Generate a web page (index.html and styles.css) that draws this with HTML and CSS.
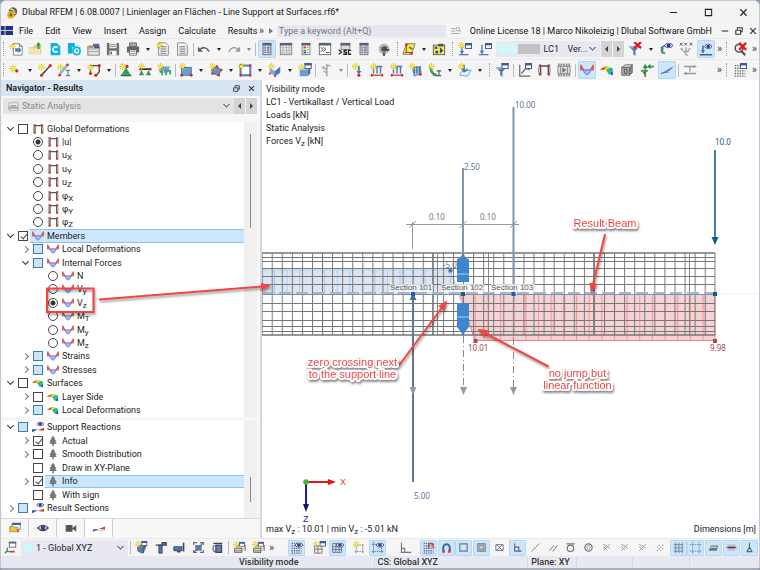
FILE: index.html
```html
<!DOCTYPE html>
<html lang="en">
<head>
<meta charset="utf-8">
<title>Dlubal RFEM</title>
<link rel="stylesheet" href="styles.css">
</head>
<body>
<svg class="sprite" aria-hidden="true">
  <defs>
    <symbol id="star" viewBox="0 0 8 8"><path d="M4 0V8M0 4H8M1.2 1.2 6.8 6.8M6.8 1.2 1.2 6.8" stroke="#d8c400" stroke-width="1"/><circle cx="4" cy="4" r="1.8" fill="#f7ea3a"/></symbol>
    <symbol id="win" viewBox="0 0 7 6"><rect x=".5" y=".5" width="6" height="5" fill="#fff" stroke="#4a5875"/><rect width="7" height="2.4" fill="#3f5ba0"/></symbol>
    <symbol id="eye" viewBox="0 0 10 6"><path d="M0 3Q5-3 10 3Q5 9 0 3Z" fill="#dfe3f5" stroke="#343a72" stroke-width="1"/><circle cx="5" cy="3" r="2.2" fill="#30378c"/></symbol>
    <symbol id="new" viewBox="0 0 16 16"><path d="M5 2h7l3 3v10H5z" fill="#fff" stroke="#777"/><path d="M12 2v3h3" fill="none" stroke="#777"/><path d="M7 7h4V5l3 4-3 4v-2H7z" fill="#4e7fb5"/><use href="#star" x="0" y="1" width="8" height="8"/></symbol>
    <symbol id="open" viewBox="0 0 16 16"><path d="M1 6h5l1-2h8v10H1z" fill="#d9c989"/><path d="M1 7h13v7H1z" fill="#f0e5b4"/><path d="M12 0l3 4h-2v4h-2V4H9z" fill="#1ba23c"/></symbol>
    <symbol id="cdoc" viewBox="0 0 16 16"><path d="M3 1h7l4 4v10H3z" fill="#08b4e4"/><path d="M11 6.500A3 3 0 1 0 11 10.500" fill="none" stroke="#fff" stroke-width="2"/></symbol>
    <symbol id="cgear" viewBox="0 0 16 16"><path d="M1 1h8v5H1zM1 4h5v9H1z" fill="#08b4e4"/><circle cx="11" cy="10" r="4" fill="#fff" stroke="#08b4e4" stroke-width="2"/><circle cx="11" cy="10" r="5.500" fill="none" stroke="#08b4e4" stroke-dasharray="2 1.500"/><circle cx="11" cy="10" r="1.500" fill="#08b4e4"/></symbol>
    <symbol id="blocks" viewBox="0 0 16 16"><rect x="1" y="5" width="13" height="10" fill="#e8e8e8" stroke="#777"/><path d="M1 8h13M1 11h13" stroke="#999"/><rect x="2" y="4" width="5" height="3" fill="#c08b60"/><path d="M7 2h7v3H7z" fill="#4c6fae"/><path d="M8 6h6" stroke="#555" stroke-width="2"/></symbol>
    <symbol id="save" viewBox="0 0 16 16"><path d="M1 1h13l1 1v13H1z" fill="#707070"/><path d="M4 1h8v6H4z" fill="#eee"/><path d="M4 10h8v5H4z" fill="#fff"/><path d="M5 3h6M5 5h6" stroke="#888"/><path d="M6 11v3" stroke="#555" stroke-width="2"/></symbol>
    <symbol id="print" viewBox="0 0 16 16"><path d="M4 1h8v4H4z" fill="#aaa" stroke="#666"/><path d="M1 5h14v7H1z" fill="#666"/><path d="M4 9h8v6H4z" fill="#fff" stroke="#666"/><path d="M5 11h6M5 13h6" stroke="#888"/></symbol>
    <symbol id="doc" viewBox="0 0 16 16"><path d="M3 1h8l3 3v11H3z" fill="#fff" stroke="#777"/><path d="M5 5h7M5 7h7M5 9h7M5 11h7M5 13h7" stroke="#777"/></symbol>
    <symbol id="listnew" viewBox="0 0 16 16"><use href="#doc" width="16" height="16"/><use href="#star" x="0" y="0" width="8" height="8"/></symbol>
    <symbol id="undo" viewBox="0 0 16 16"><path d="M3 9Q9 3 14 11" fill="none" stroke="#666" stroke-width="1.800"/><path d="M1 5v6h6z" fill="#666"/></symbol>
    <symbol id="redo" viewBox="0 0 16 16"><path d="M13 9Q7 3 2 11" fill="none" stroke="#999" stroke-width="1.500"/><path d="M15 5v6H9z" fill="#999"/></symbol>
    <symbol id="panel" viewBox="0 0 16 16"><rect x="3.500" y="1.500" width="9" height="13" fill="#d6dbe0" stroke="#666"/><path d="M3 1h10v3H3z" fill="#56627c"/><path d="M5 6h2M5 8h2M5 10h2M5 12h2M8 6h3M8 8h3M8 10h3M8 12h3" stroke="#557"/></symbol>
    <symbol id="table" viewBox="0 0 16 16"><rect x="1.500" y="1.500" width="13" height="13" fill="#f4f4f4" stroke="#777"/><path d="M1 1h14v3H1z" fill="#56627c"/><path d="M1 6.500h14M1 9.500h14M1 12.500h14M4.500 4v11M8.500 4v11M11.500 4v11" stroke="#aaa"/></symbol>
    <symbol id="colors" viewBox="0 0 16 16"><rect x="3.500" y="1.500" width="9" height="13" fill="#fff" stroke="#777"/><path d="M3 1h10v3H3z" fill="#56627c"/><path d="M5 5h3v2H5z" fill="#e33"/><path d="M5 7h3v2H5z" fill="#ec3"/><path d="M5 9h3v2H5z" fill="#3b4"/><path d="M5 11h3v2H5z" fill="#35d"/><path d="M9 6h2M9 9h2M9 12h2" stroke="#666"/></symbol>
    <symbol id="console" viewBox="0 0 16 16"><rect x="1.500" y="1.500" width="13" height="13" fill="#fff" stroke="#666"/><path d="M1 1h14v3H1z" fill="#56627c"/><path d="M3 6l3 2.500L3 11M6 6l3 2.500L6 11M9 12h4" fill="none" stroke="#333"/></symbol>
    <symbol id="sc" viewBox="0 0 16 16"><rect x="3.500" y="1.500" width="10" height="7" fill="#ddd" stroke="#777"/><path d="M3 1h11v3H3z" fill="#56627c"/><path d="M1 9l3 2.500L1 14M10 9.500H7v2h2.500v2.500H6M15 9.500h-3v4.500h3" fill="none" stroke="#222" stroke-width="1.500"/></symbol>
    <symbol id="wheel" viewBox="0 0 16 16"><circle cx="8" cy="8" r="5.500" fill="#bbb" stroke="#888" stroke-dasharray="2 1"/><circle cx="8" cy="8" r="3.200" fill="#555"/><path d="M10 5v4h4M8 12v4" stroke="#444" fill="none" stroke-width="2"/></symbol>
    <symbol id="plane" viewBox="0 0 16 16"><path d="M5 2h10l-4 12H1z" fill="#f3e94a" stroke="#777"/><path d="M5 3v9M3 12h8" stroke="#a33"/><circle cx="5" cy="3" r="1.500" fill="#d22"/><circle cx="11" cy="13" r="1.500" fill="#d22"/><path d="M8 6l4 2" stroke="#393" stroke-width="2"/></symbol>
    <symbol id="ybox" viewBox="0 0 16 16"><rect x="1.500" y="3.500" width="13" height="11" fill="#f3ea62" stroke="#555"/><path d="M3 5h3v3H3zM7 2h6v3H7z" fill="#555"/><path d="M4 10h3v3H4zM9 6v7l4-3z" fill="#3b4668"/></symbol>
    <symbol id="load" viewBox="0 0 16 16"><path d="M4.500 3v10M1 14.500h11" stroke="#4a78b8" stroke-width="1.500"/><path d="M2 10h5l-2.500 4z" fill="#4a78b8"/><use href="#win" x="8" y="1" width="8" height="7"/></symbol>
    <symbol id="loadnew" viewBox="0 0 16 16"><use href="#load" width="16" height="16"/><use href="#star" width="8" height="8"/></symbol>
    <symbol id="filter" viewBox="0 0 16 16"><path d="M1 5h12L8.500 10v6L6 14v-4z" fill="#4f77b0"/><path d="M1 5h12l-2 2H3z" fill="#8db2dc"/></symbol>
    <symbol id="filterx" viewBox="0 0 16 16"><use href="#filter" width="16" height="16"/><path d="M7 0l8 7M15 0L7 7" stroke="#e5141c" stroke-width="2.500"/></symbol>
    <symbol id="filterwin" viewBox="0 0 16 16"><use href="#filter" width="16" height="16"/><use href="#win" x="7" y="0" width="9" height="7"/></symbol>
    <symbol id="speye" viewBox="0 0 16 16"><path d="M7 4Q1 6 4 13M2 6l3 2M2 9l3 1M3 12l4 1" fill="none" stroke="#3f8b66" stroke-width="2"/><use href="#eye" x="6" y="1" width="10" height="6"/></symbol>
    <symbol id="xxx" viewBox="0 0 16 16"><path d="M1 1l3 3M4 1L1 4M6 1l3 3M9 1L6 4M12 1l3 3M15 1l-3 3" stroke="#444"/><path d="M2 7l3 3M13 7l-3 3M8 6v4M5 11h6M7 11q0 4 3 4" fill="none" stroke="#999" stroke-width="1.500"/></symbol>
    <symbol id="arroweye" viewBox="0 0 16 16"><path d="M4.500 4v8M1 14.500h14" stroke="#44628c" stroke-width="1.600"/><path d="M2 9h5l-2.500 4z" fill="#4a78b8"/><use href="#eye" x="6" y="2" width="9" height="6"/></symbol>
    <symbol id="zoomx" viewBox="0 0 16 16"><circle cx="7" cy="7" r="4.500" fill="none" stroke="#555" stroke-width="1.800"/><path d="M9 10l5 5" stroke="#555" stroke-width="2.500"/><path d="M7 1l8 8M15 1L7 9" stroke="#e5141c" stroke-width="2.500"/></symbol>
    <symbol id="node" viewBox="0 0 16 16"><use href="#star" x="1" y="2" width="9" height="9"/><circle cx="10" cy="9" r="1.800" fill="#c22"/></symbol>
    <symbol id="line" viewBox="0 0 16 16"><path d="M4 14L14 3" stroke="#333" stroke-width="1.600"/><circle cx="4" cy="14" r="1.800" fill="#d22"/><circle cx="14" cy="3" r="1.800" fill="#d22"/><use href="#star" y="1" width="8" height="8"/></symbol>
    <symbol id="member" viewBox="0 0 16 16"><path d="M3 13L12 2" stroke="#8fb4e0" stroke-width="3"/><use href="#star" y="1" width="8" height="8"/><circle cx="12" cy="2" r="1.500" fill="#d22"/><circle cx="3" cy="14" r="1.500" fill="#d22"/><path d="M10 8.500h5M12.500 8.500v6M10 14.500h5" stroke="#688" stroke-width="1.300"/></symbol>
    <symbol id="poly" viewBox="0 0 16 16"><path d="M4 12V3h10v7l-4 5" fill="none" stroke="#444" stroke-width="1.500"/><circle cx="4" cy="12" r="1.800" fill="#d22"/><circle cx="14" cy="3" r="1.800" fill="#d22"/><circle cx="10" cy="14" r="1.800" fill="#d22"/><use href="#star" y="1" width="8" height="8"/></symbol>
    <symbol id="nsup" viewBox="0 0 16 16"><path d="M8 5l5 8H3z" fill="#2c9a58"/><path d="M2 14h12" stroke="#23713f" stroke-width="2"/><circle cx="9" cy="4" r="2" fill="#d22"/><use href="#star" y="0" width="8" height="8"/></symbol>
    <symbol id="lsup" viewBox="0 0 16 16"><path d="M2 7h12" stroke="#333" stroke-width="2"/><path d="M4 8l3 6H1zM12 8l3 6H9z" fill="#2c9a58"/><circle cx="3" cy="7" r="1.600" fill="#d22"/><circle cx="14" cy="7" r="1.600" fill="#d22"/><use href="#star" y="0" width="8" height="8"/></symbol>
    <symbol id="ssup" viewBox="0 0 16 16"><path d="M4 4h11l-2 5H2z" fill="#6f9fcb"/><path d="M3 10h3v4M8 10h3l-1 4M12 9h3v4" fill="none" stroke="#37a064" stroke-width="2"/><use href="#star" y="0" width="8" height="8"/></symbol>
    <symbol id="surf" viewBox="0 0 16 16"><rect x="3" y="5" width="11" height="9" fill="#6d9ed2" stroke="#476b93"/><circle cx="14" cy="14" r="1.600" fill="#d22"/><circle cx="3" cy="14" r="1.600" fill="#d22"/><use href="#star" y="0" width="8" height="8"/></symbol>
    <symbol id="shell" viewBox="0 0 16 16"><path d="M3 7l6-3 5 4-3 6-7-2z" fill="#6d8fc0" stroke="#476b93"/><circle cx="9" cy="4" r="1.500" fill="#d22"/><circle cx="14" cy="8" r="1.500" fill="#d22"/><circle cx="11" cy="14" r="1.500" fill="#d22"/><circle cx="4" cy="12" r="1.500" fill="#d22"/><use href="#star" y="0" width="8" height="8"/></symbol>
    <symbol id="opening" viewBox="0 0 16 16"><rect x="3" y="3" width="11" height="11" fill="#fff" stroke="#5f86b4" stroke-width="2.500"/><path d="M2 3h2M13 3h2M2 14h2M13 14h2" stroke="#d22" stroke-width="3"/><use href="#star" y="0" width="8" height="8"/></symbol>
    <symbol id="fold" viewBox="0 0 16 16"><path d="M2 6l6 3v6l-6-4z" fill="#79aadd"/><path d="M8 9l6-5v7l-6 4z" fill="#4b7bb4"/><path d="M1 12h2M7 15h2" stroke="#d22" stroke-width="2"/><use href="#star" y="0" width="8" height="8"/></symbol>
    <symbol id="boxwin" viewBox="0 0 16 16"><path d="M2 8l3-3h9l-3 3z" fill="#a4c7ea"/><path d="M2 8h9v7H2z" fill="#6d9ed2"/><path d="M11 8l3-3v7l-3 3z" fill="#466f9e"/><use href="#win" x="7" y="0" width="9" height="7"/><use href="#star" y="1" width="8" height="8"/></symbol>
    <symbol id="dim" viewBox="0 0 16 16"><path d="M9 1v14M9 3h4M5 5l4 3M5 9l3 2" stroke="#aaa" stroke-width="1.800"/><circle cx="5" cy="5" r="2" fill="#bbb"/></symbol>
    <symbol id="nload" viewBox="0 0 16 16"><path d="M9 3v8" stroke="#4a78b8" stroke-width="2"/><path d="M6 9h6l-3 4z" fill="#4a78b8"/><circle cx="9" cy="14" r="1.800" fill="#d22"/><use href="#star" x="1" y="0" width="8" height="8"/></symbol>
    <symbol id="mload" viewBox="0 0 16 16"><path d="M2 4h12M4 4v8M8 4v8M12 4v8" stroke="#4a78b8" stroke-width="1.600"/><path d="M2 14h12" stroke="#d55" stroke-width="1.500"/><path d="M1 14h2M13 14h2" stroke="#c22" stroke-width="3"/><use href="#star" y="0" width="8" height="8"/></symbol>
    <symbol id="sload" viewBox="0 0 16 16"><path d="M4 5l9-1 1 8-8 3z" fill="#a9c5e4" stroke="#5878a8"/><path d="M6 4v8M9 4v8M12 4v8" stroke="#4a68a8" stroke-width="1.500"/><circle cx="13" cy="13" r="1.500" fill="#d22"/><use href="#star" y="0" width="8" height="8"/></symbol>
    <symbol id="imp" viewBox="0 0 16 16"><path d="M3 3q0 10 7 11" fill="none" stroke="#38955a" stroke-width="3"/><path d="M10 9h5M12.500 9v5M10 14.500h5" stroke="#555" stroke-width="1.300"/><use href="#star" y="0" width="8" height="8"/></symbol>
    <symbol id="free" viewBox="0 0 16 16"><path d="M4 10l11-2-4 7-9-1z" fill="#e6f3fb" stroke="#57a6cf"/><path d="M7 2v7M4 6l3 4 4-3" fill="none" stroke="#4a78b8" stroke-width="1.800"/><use href="#star" y="0" width="8" height="8"/></symbol>
    <symbol id="axis" viewBox="0 0 16 16"><path d="M2 2v13h12M4 12l5-6 4 2" fill="none" stroke="#667" stroke-width="1.400"/><use href="#win" x="8" y="0" width="8" height="7"/></symbol>
    <symbol id="defo" viewBox="0 0 16 16"><path d="M4 13V3.500h9V13" fill="none" stroke="#555" stroke-width="1.800"/><path d="M3 4Q0 8 3 13M14 4q2 4 0 9" fill="none" stroke="#999" stroke-width="1.300"/><path d="M2 13h3M12 13h3M2 3h3M12 3h3" stroke="#c83a3a" stroke-width="2.500"/></symbol>
    <symbol id="film" viewBox="0 0 16 16"><path d="M1 2h14M1 14h14" stroke="#888" stroke-width="3" stroke-dasharray="2 1"/><path d="M1 4v8h14V4z" fill="#ddd" stroke="#888"/><path d="M4 4v8M12 4v8" stroke="#888"/><path d="M6 5l5 3-5 3z" fill="#777"/></symbol>
    <symbol id="mem" viewBox="0 0 16 16"><path d="M0 8H16" stroke="#778"/><path d="M3.500 8Q8 19 12.500 8Z" fill="#aab6f2" stroke="#6478e8"/><path d="M1 2v6M1 3l3 5M15 2v6M15 3l-3 5" fill="none" stroke="#e85050" stroke-width="1.800"/></symbol>
    <symbol id="rain" viewBox="0 0 16 16"><path d="M0 8Q5 3 9 4L7 8Z" fill="#e9a02a"/><path d="M0 8Q3 5 6 4.500L5 7Z" fill="#e33b25"/><path d="M5 7l4-3 3 1-3 5z" fill="#dde22c"/><path d="M7 8l5-3 2 1-1 6-3 1z" fill="#35c24b"/><path d="M9 9l6-3-1 6-3 1z" fill="#1fb7d8"/><path d="M12 12l2-3 1 4-2 1z" fill="#3147d6"/></symbol>
    <symbol id="cube" viewBox="0 0 16 16"><path d="M2 5l4-3h8l-3 3z" fill="#ddd" stroke="#666"/><path d="M2 5h9v9H2z" fill="#aaa" stroke="#666"/><path d="M11 5l3-3v9l-3 3z" fill="#888" stroke="#666"/><path d="M5 7v5h3V7z" fill="none" stroke="#555"/></symbol>
    <symbol id="greens" viewBox="0 0 16 16"><path d="M6 16V6M1 9h8M16 4H10" stroke="#33a04e" stroke-width="2"/><path d="M3 6h6L6 1zM12 1v6L8 4z" fill="#258c40"/><path d="M3 11l3-2v5z" fill="#b33"/></symbol>
    <symbol id="wedge" viewBox="0 0 16 16"><path d="M1 12L15 4Q13 9 7 10z" fill="#5b76d8"/><path d="M1 12l9-2" stroke="#4157a8"/></symbol>
    <symbol id="arrows" viewBox="0 0 16 16"><path d="M1 4h12M3 12h12M8 4q0 8 0 4" fill="none" stroke="#999" stroke-width="1.500"/><path d="M12 2l4 2-4 2zM4 10l-4 2 4 2z" fill="#999"/></symbol>
    <symbol id="grid" viewBox="0 0 16 16"><path d="M2 3h12M2 6h12M2 9h12M2 12h12M2 15h12" stroke="#667" stroke-width="1.600" stroke-dasharray="1.600 1.200"/></symbol>
    <symbol id="gridwin" viewBox="0 0 16 16"><use href="#grid" width="16" height="16"/><use href="#win" x="8" y="0" width="8" height="7"/></symbol>
    <symbol id="grideye" viewBox="0 0 16 16"><use href="#grid" width="16" height="16"/><use href="#eye" x="6" y="2" width="10" height="6"/></symbol>
    <symbol id="treeic" viewBox="0 0 16 16"><path d="M8 1l3 4-1 0 3 4-2 0 2 3H3l2-3H3l3-4H5z" fill="#777"/><path d="M8 11v4" stroke="#666" stroke-width="1.800"/></symbol>
    <symbol id="redblue" viewBox="0 0 16 16"><path d="M0 13v-3l8-1z" fill="#2f56b4"/><path d="M8 9l8-3v4z" fill="#d33b2b"/><path d="M0 11h16" stroke="#555" stroke-width=".5"/></symbol>
    <symbol id="rbeye" viewBox="0 0 16 16"><path d="M0 15v-4l8 0z" fill="#2f56b4"/><path d="M8 12l8-3v4z" fill="#d33b2b"/><use href="#eye" x="6" y="1" width="10" height="6"/></symbol>
    <symbol id="folder" viewBox="0 0 16 16"><path d="M4 2h11v8H4z" fill="#fff" stroke="#4a69ad"/><path d="M4 1h12v3H4z" fill="#3f62b5"/><path d="M1 6h5l1 1h5v6H1z" fill="#edc34b" stroke="#a98222"/><path d="M10 9l5 4h-3v2z" fill="#d44"/></symbol>
    <symbol id="bigeye" viewBox="0 0 16 16"><path d="M1 8Q8 1 15 8Q8 15 1 8Z" fill="#fff" stroke="#445" stroke-width="1.500"/><circle cx="8" cy="8" r="3.200" fill="#38449c"/></symbol>
    <symbol id="cam" viewBox="0 0 16 16"><path d="M1 4h9v9H1zM10 8l5-4v9l-5-4z" fill="#555"/></symbol>
    <symbol id="cs" viewBox="0 0 16 16"><path d="M4 8v5h5M4 12l-3 3" fill="none" stroke="#2a9a4a" stroke-width="1.600"/><path d="M8 13h5" stroke="#d33" stroke-width="2"/><rect x="6.500" y="1.500" width="8" height="6" fill="#fff" stroke="#557"/><path d="M6 1h9v2H6z" fill="#56627c"/></symbol>
    <symbol id="vcube" viewBox="0 0 16 16"><path d="M3 8l4-3h7l-4 10-6-2z" fill="#5d83b4" stroke="#456"/><path d="M10 8v6M10 8l4-3" stroke="#345"/><use href="#win" x="7" y="0" width="9" height="6"/><use href="#star" y="0" width="8" height="8"/></symbol>
    <symbol id="vx" viewBox="0 0 16 16"><path d="M6 5h4v10H6z" fill="#4f78b0" stroke="#345"/><path d="M2 5h10M10 2h5v3h-5z" fill="#5d83b4" stroke="#445" stroke-width="1.600"/></symbol>
    <symbol id="vy" viewBox="0 0 16 16"><path d="M1 7h10v5H1z" fill="#4f78b0" stroke="#345"/><path d="M13 2v11M5 13h4" stroke="#445" stroke-width="2"/></symbol>
    <symbol id="vz" viewBox="0 0 16 16"><path d="M4 5h8v7H4z" fill="#5d83b4"/><path d="M2 5V2h4M10 2h4v3M14 11v3h-4M6 14H2v-3M3 13L13 3" fill="none" stroke="#667" stroke-width="1.300"/></symbol>
    <symbol id="vr" viewBox="0 0 16 16"><path d="M6 5h7v9H6zM3 3h11" fill="#5d83b4" stroke="#445" stroke-width="1.600"/><path d="M4 5Q0 11 6 14" fill="none" stroke="#667" stroke-width="1.600"/></symbol>
    <symbol id="vbuild" viewBox="0 0 16 16"><path d="M2 14V9h9v5zM4 8l2-3h9v7" fill="#ded8ce" stroke="#555"/><path d="M2 12h9" stroke="#965"/><use href="#win" x="7" y="1" width="8" height="6"/><use href="#star" y="0" width="8" height="8"/></symbol>
    <symbol id="tilenew" viewBox="0 0 16 16"><path d="M2 6h9v9H2zM2 10h9M6 6v9" fill="#eee" stroke="#666"/><use href="#win" x="8" y="0" width="8" height="7"/><use href="#star" y="0" width="7" height="7"/></symbol>
    <symbol id="tileeye" viewBox="0 0 16 16"><path d="M2 3h11v11H2zM2 7h11M2 10.500h11M6 3v11M10 3v11" fill="none" stroke="#667"/><use href="#eye" x="6" y="2" width="10" height="6"/></symbol>
    <symbol id="marknew" viewBox="0 0 16 16"><path d="M4 4v11M12 4v11M2 5h12M2 13h12" fill="none" stroke="#777" stroke-dasharray="2 1"/><use href="#star" width="8" height="8"/></symbol>
    <symbol id="markeye" viewBox="0 0 16 16"><path d="M3 1v14M13 8v7M1 4h6M1 13h14" fill="none" stroke="#567" stroke-dasharray="2 1"/><use href="#eye" x="6" y="2" width="10" height="6"/></symbol>
    <symbol id="ell" viewBox="0 0 16 16"><path d="M3 2v12h12M3 9h4v5" fill="none" stroke="#777" stroke-width="1.400"/></symbol>
    <symbol id="gmag" viewBox="0 0 16 16"><use href="#grid" width="16" height="16"/><path d="M8 9V6a3 3 0 0 1 6 0v3" fill="none" stroke="#c44a4a" stroke-width="2"/></symbol>
    <symbol id="mag" viewBox="0 0 16 16"><path d="M4 13V8a4 4 0 0 1 8 0v5" fill="none" stroke="#4668a5" stroke-width="2.500"/><path d="M3 13h3M10 13h3" stroke="#d33" stroke-width="3"/></symbol>
    <symbol id="sq" viewBox="0 0 16 16"><path d="M3.500 3.500h9v9h-9z" fill="none" stroke="#777" stroke-width="1.400"/></symbol>
    <symbol id="sqo" viewBox="0 0 16 16"><use href="#sq" width="16" height="16"/><circle cx="8" cy="8" r="3" fill="none" stroke="#777"/><path d="M4 4l8 8M12 4l-8 8" stroke="#999"/></symbol>
    <symbol id="sqx" viewBox="0 0 16 16"><path d="M3.500 4.500h9v7h-9zM4 4l8 8M12 4l-8 8" fill="none" stroke="#777" stroke-width="1.200"/></symbol>
    <symbol id="perp" viewBox="0 0 16 16"><path d="M4.500 3v9.500H13M5 7.500h4.500v5" fill="none" stroke="#667" stroke-width="1.400"/></symbol>
    <symbol id="sl" viewBox="0 0 16 16"><path d="M3 13l4-4M8 8l5-5M6 8l2 2" stroke="#888" stroke-width="1.200"/></symbol>
    <symbol id="par" viewBox="0 0 16 16"><path d="M3 12l6-7M7 13l6-8" stroke="#777" stroke-width="1.200"/></symbol>
    <symbol id="tan" viewBox="0 0 16 16"><path d="M3 3.500h10" stroke="#777" stroke-width="1.500"/><circle cx="8" cy="9" r="4" fill="none" stroke="#777" stroke-width="1.500"/></symbol>
    <symbol id="circ" viewBox="0 0 16 16"><circle cx="8" cy="8" r="4.500" fill="none" stroke="#777" stroke-width="1.500"/><circle cx="8" cy="8" r="2.200" fill="none" stroke="#999"/></symbol>
    <symbol id="cr" viewBox="0 0 16 16"><path d="M4 12l8-8M4 7l5 4M7 5l5 4M4 4l3 2" stroke="#999" stroke-width="1.200"/></symbol>
    <symbol id="dots" viewBox="0 0 16 16"><path d="M4 12l8-8M8 12l4-4M4 8l3-4" stroke="#999" stroke-width="1.400" stroke-dasharray="1.500 1.500"/></symbol>
    <symbol id="gridl" viewBox="0 0 16 16"><path d="M2 4.500h12M2 8.500h12M2 12.500h12M4.500 2v13M8.500 2v13M12.500 2v13" stroke="#68798c"/></symbol>
    <symbol id="mark" viewBox="0 0 16 16"><path d="M4.500 1v14M12.500 1v14M1 4.500h14M1 12.500h14" stroke="#68798c" stroke-dasharray="2 1"/></symbol>
    <symbol id="layers" viewBox="0 0 16 16"><path d="M2 12l3-7h9l-2 7z" fill="#777"/><path d="M4 8h8M5 6h8" stroke="#fff" stroke-width=".8"/></symbol>
    <symbol id="clip" viewBox="0 0 16 16"><path d="M3 5h10M3 11h10" stroke="#9ab"/><path d="M2 8h12" stroke="#e33" stroke-width="2"/><path d="M4 8h8" stroke="#534" stroke-width="2"/></symbol>
    <symbol id="pin" viewBox="0 0 16 16"><path d="M8 2v8M5 13l3-6 3 6z" fill="none" stroke="#567" stroke-width="1.400"/></symbol>
    <symbol id="load3" viewBox="0 0 16 16"><path d="M1.500 2.500h13v11h-13z" fill="#eee" stroke="#999"/><path d="M1 10h14M4 7h8" stroke="#888" stroke-width="2"/></symbol>
    <symbol id="find" viewBox="0 0 16 16"><path d="M0 4h7M0 8h7M0 12h14" stroke="#999" stroke-width="1.300"/><circle cx="11" cy="5" r="3" fill="none" stroke="#999" stroke-width="1.300"/><path d="M13 7l3 3" stroke="#999" stroke-width="1.300"/></symbol>
    <symbol id="restore" viewBox="0 0 10 10"><path d="M3 3V1h6v5H7M1 4h6v5H1z" fill="none" stroke="#333" stroke-width="1.300"/></symbol>
    <symbol id="close" viewBox="0 0 10 10"><path d="M1.500 1.500l7 7M8.500 1.500l-7 7" stroke="#333" stroke-width="1.500"/></symbol>
    <symbol id="max" viewBox="0 0 10 10"><path d="M1.500 1.500h7v7h-7z" fill="none" stroke="#222" stroke-width="1.200"/></symbol>
    <symbol id="min" viewBox="0 0 10 10"><path d="M1 5h8" stroke="#222" stroke-width="1.300"/></symbol>
  </defs>
</svg>

<div class="app">
  <header class="titlebar">
    <svg class="logo" viewBox="0 0 16 16"><path d="M3 6Q6 0 11 2q4 2 2 8l-3 3-4-5z" fill="#4d6479"/><circle cx="6" cy="11" r="4.500" fill="#e3ae1d"/><path d="M5 4q5-1 6 6" fill="none" stroke="#e9c64d" stroke-width="2"/><circle cx="6" cy="11" r="1.800" fill="#7d5d1b"/></svg>
    <h1>Dlubal RFEM | 6.08.0007 | Linienlager an Flächen - Line Support at Surfaces.rf6*</h1>
    <div class="winbtns">
      <button aria-label="Minimize"><svg><use href="#min"/></svg></button>
      <button aria-label="Maximize"><svg><use href="#max"/></svg></button>
      <button aria-label="Close"><svg><use href="#close"/></svg></button>
    </div>
  </header>

  <div class="menubar">
    <svg class="flag" viewBox="0 0 12 9"><path d="M0 0h12v9H0z" fill="#26327c"/><path d="M0 4.500h12M4 0v9" stroke="#c5cbe8"/></svg>
    <nav><a href="#">File</a><a href="#">Edit</a><a href="#">View</a><a href="#">Insert</a><a href="#">Assign</a><a href="#">Calculate</a><a href="#">Results</a></nav>
    <span class="more">»</span><span class="play"></span>
    <input class="search" type="text" aria-label="Keyword search" placeholder="Type a keyword (Alt+Q)">
    <svg class="find"><use href="#find"/></svg>
    <span class="license">Online License 18 | Marco Nikoleizig | Dlubal Software GmbH</span>
    <div class="docbtns">
      <button aria-label="Minimize document"><svg><use href="#min"/></svg></button>
      <button aria-label="Restore document"><svg><use href="#restore"/></svg></button>
      <button aria-label="Close document"><svg><use href="#close"/></svg></button>
    </div>
  </div>

  <div class="toolbar main">
    <div class="group">
      <i class="grip"></i>
      <button class="tb" aria-label="New"><svg><use href="#new"/></svg></button>
      <button class="tb" aria-label="Open"><svg><use href="#open"/></svg></button>
      <button class="tb" aria-label="Block manager"><svg><use href="#cdoc"/></svg></button>
      <button class="tb" aria-label="Cloud settings"><svg><use href="#cgear"/></svg></button>
      <button class="tb" aria-label="Blocks"><svg><use href="#blocks"/></svg></button>
      <button class="tb" aria-label="Save"><svg><use href="#save"/></svg></button>
      <button class="tb" aria-label="Print"><svg><use href="#print"/></svg></button>
      <button class="caret" aria-label="Print options"></button>
      <button class="tb" aria-label="New report"><svg><use href="#listnew"/></svg></button>
      <button class="tb" aria-label="Report"><svg><use href="#doc"/></svg></button>
      <i class="sep"></i>
      <button class="tb" aria-label="Undo"><svg><use href="#undo"/></svg></button>
      <button class="caret" aria-label="Undo list"></button>
      <button class="tb" aria-label="Redo"><svg><use href="#redo"/></svg></button>
      <button class="caret dim" aria-label="Redo list"></button>
      <i class="sep"></i>
      <button class="tb on" aria-label="Navigator"><svg><use href="#panel"/></svg></button>
      <button class="tb" aria-label="Tables"><svg><use href="#table"/></svg></button>
      <button class="tb" aria-label="Control panel"><svg><use href="#colors"/></svg></button>
      <button class="tb" aria-label="Console"><svg><use href="#console"/></svg></button>
      <button class="tb" aria-label="Script manager"><svg><use href="#sc"/></svg></button>
      <button class="tb" aria-label="Panel"><svg><use href="#panel"/></svg></button>
      <button class="tb" aria-label="Navigation wheel"><svg><use href="#wheel"/></svg></button>
    </div>
    <div class="group">
      <i class="grip"></i>
      <button class="tb" aria-label="Work plane"><svg><use href="#plane"/></svg></button>
      <button class="caret" aria-label="Work plane list"></button>
      <button class="tb" aria-label="Selection"><svg><use href="#ybox"/></svg></button>
    </div>
    <div class="group">
      <i class="grip"></i>
      <button class="tb" aria-label="New load case"><svg><use href="#loadnew"/></svg></button>
      <button class="tb" aria-label="Load cases"><svg><use href="#load"/></svg></button>
      <div class="lc">
        <i class="sw c1"></i><i class="sw c2"></i><i class="sw c3"></i><span>LC1</span>
        <select aria-label="Load case"><option>Ver...</option></select>
      </div>
      <div class="pair"><button aria-label="Previous load case"><i class="tri l"></i></button><button aria-label="Next load case"><i class="tri"></i></button></div>
      <button class="tb" aria-label="Clear filter"><svg><use href="#filterx"/></svg></button>
      <button class="caret" aria-label="Filter list"></button>
      <button class="tb" aria-label="Show imperfections"><svg><use href="#speye"/></svg></button>
      <button class="tb" aria-label="Show values"><svg><use href="#xxx"/></svg></button>
      <button class="tb on" aria-label="Show loads"><svg><use href="#arroweye"/></svg></button>
      <span class="more">»</span>
    </div>
    <div class="group">
      <i class="grip"></i>
      <button class="tb" aria-label="Cancel zoom"><svg><use href="#zoomx"/></svg></button>
      <span class="more">»</span>
    </div>
  </div>

  <div class="toolbar edit">
    <div class="group">
      <i class="grip"></i>
      <button class="tb" aria-label="Node"><svg><use href="#node"/></svg></button>
      <button class="caret" aria-label="Node list"></button>
      <button class="tb" aria-label="Line"><svg><use href="#line"/></svg></button>
      <button class="tb" aria-label="Member"><svg><use href="#member"/></svg></button>
      <button class="caret" aria-label="Member list"></button>
      <button class="tb" aria-label="Polyline"><svg><use href="#poly"/></svg></button>
      <button class="caret" aria-label="Polyline list"></button>
      <i class="sep"></i>
      <button class="tb" aria-label="Nodal support"><svg><use href="#nsup"/></svg></button>
      <button class="tb" aria-label="Line support"><svg><use href="#lsup"/></svg></button>
      <button class="tb" aria-label="Surface support"><svg><use href="#ssup"/></svg></button>
      <i class="sep"></i>
      <button class="tb" aria-label="Surface"><svg><use href="#surf"/></svg></button>
      <button class="caret" aria-label="Surface list"></button>
      <button class="tb" aria-label="Shell"><svg><use href="#shell"/></svg></button>
      <button class="caret" aria-label="Shell list"></button>
      <button class="tb" aria-label="Opening"><svg><use href="#opening"/></svg></button>
      <button class="caret" aria-label="Opening list"></button>
      <button class="tb" aria-label="Solid"><svg><use href="#fold"/></svg></button>
      <button class="caret" aria-label="Solid list"></button>
      <button class="tb" aria-label="Block"><svg><use href="#boxwin"/></svg></button>
      <i class="sep"></i>
      <button class="tb" aria-label="Dimension"><svg><use href="#dim"/></svg></button>
      <button class="caret dim" aria-label="Dimension list"></button>
      <i class="sep"></i>
      <button class="tb" aria-label="Nodal load"><svg><use href="#nload"/></svg></button>
      <button class="tb" aria-label="Member load"><svg><use href="#mload"/></svg></button>
      <button class="tb" aria-label="Line load"><svg><use href="#mload"/></svg></button>
      <button class="tb" aria-label="Surface load"><svg><use href="#sload"/></svg></button>
      <button class="tb" aria-label="Imperfection"><svg><use href="#imp"/></svg></button>
      <button class="caret" aria-label="Imperfection list"></button>
      <button class="tb" aria-label="Free load"><svg><use href="#free"/></svg></button>
      <button class="caret" aria-label="Free load list"></button>
    </div>
    <div class="group">
      <i class="grip"></i>
      <button class="tb" aria-label="Result filter"><svg><use href="#filterwin"/></svg></button>
      <i class="sep"></i>
      <button class="tb" aria-label="Diagram"><svg><use href="#axis"/></svg></button>
      <button class="tb" aria-label="Deformation"><svg><use href="#defo"/></svg></button>
      <button class="tb" aria-label="Animation"><svg><use href="#film"/></svg></button>
      <i class="sep"></i>
      <button class="tb on" aria-label="Member results"><svg><use href="#mem"/></svg></button>
      <button class="tb" aria-label="Surface results"><svg><use href="#rain"/></svg></button>
      <button class="tb" aria-label="Solid results"><svg><use href="#cube"/></svg></button>
      <button class="tb" aria-label="Support reactions"><svg><use href="#greens"/></svg></button>
      <button class="tb on" aria-label="Result sections"><svg><use href="#wedge"/></svg></button>
      <i class="sep"></i>
      <button class="tb" aria-label="Exchange"><svg><use href="#arrows"/></svg></button>
      <span class="more push">»</span>
    </div>
    <div class="group">
      <i class="grip"></i>
      <button class="tb" aria-label="Grid settings"><svg><use href="#gridwin"/></svg></button>
      <span class="more">»</span>
    </div>
  </div>

  <div class="body">
    <aside class="nav">
      <div class="navhead"><h2>Navigator - Results</h2>
        <button aria-label="Float panel"><svg><use href="#restore"/></svg></button>
        <button aria-label="Close panel"><svg><use href="#close"/></svg></button></div>
      <div class="navcombo">
        <div class="box"><svg class="ic"><use href="#load3"/></svg>
        <select aria-label="Analysis" disabled><option>Static Analysis</option></select></div>
        <div class="pair"><button aria-label="Previous analysis"><i class="tri l"></i></button><button aria-label="Next analysis"><i class="tri"></i></button></div>
      </div>
      <div class="scroller upper">
      <ul class="tree">
        <li><i class="ex open"></i><label><input type="checkbox"><svg><use href="#defo"/></svg><span>Global Deformations</span></label></li>
        <li class="l1"><label><input type="radio" name="def" checked><svg><use href="#defo"/></svg><span>|u|</span></label></li>
        <li class="l1"><label><input type="radio" name="def"><svg><use href="#defo"/></svg><span>u<sub>X</sub></span></label></li>
        <li class="l1"><label><input type="radio" name="def"><svg><use href="#defo"/></svg><span>u<sub>Y</sub></span></label></li>
        <li class="l1"><label><input type="radio" name="def"><svg><use href="#defo"/></svg><span>u<sub>Z</sub></span></label></li>
        <li class="l1"><label><input type="radio" name="def"><svg><use href="#defo"/></svg><span>φ<sub>X</sub></span></label></li>
        <li class="l1"><label><input type="radio" name="def"><svg><use href="#defo"/></svg><span>φ<sub>Y</sub></span></label></li>
        <li class="l1"><label><input type="radio" name="def"><svg><use href="#defo"/></svg><span>φ<sub>Z</sub></span></label></li>
        <li class="sel"><i class="ex open"></i><label><input type="checkbox" checked><svg><use href="#mem"/></svg><span>Members</span></label></li>
        <li class="l1"><i class="ex"></i><label><input type="checkbox" class="part"><svg><use href="#mem"/></svg><span>Local Deformations</span></label></li>
        <li class="l1"><i class="ex open"></i><label><input type="checkbox" class="part"><svg><use href="#mem"/></svg><span>Internal Forces</span></label></li>
        <li class="l2"><label><input type="radio" name="force"><svg><use href="#mem"/></svg><span>N</span></label></li>
        <li class="l2"><label><input type="radio" name="force"><svg><use href="#mem"/></svg><span>V<sub>y</sub></span></label></li>
        <li class="l2"><label><input type="radio" name="force" checked><svg><use href="#mem"/></svg><span>V<sub>z</sub></span></label></li>
        <li class="l2"><label><input type="radio" name="force"><svg><use href="#mem"/></svg><span>M<sub>T</sub></span></label></li>
        <li class="l2"><label><input type="radio" name="force"><svg><use href="#mem"/></svg><span>M<sub>y</sub></span></label></li>
        <li class="l2"><label><input type="radio" name="force"><svg><use href="#mem"/></svg><span>M<sub>z</sub></span></label></li>
        <li class="l1"><i class="ex"></i><label><input type="checkbox" class="part"><svg><use href="#mem"/></svg><span>Strains</span></label></li>
        <li class="l1"><i class="ex"></i><label><input type="checkbox" class="part"><svg><use href="#mem"/></svg><span>Stresses</span></label></li>
        <li><i class="ex open"></i><label><input type="checkbox"><svg><use href="#rain"/></svg><span>Surfaces</span></label></li>
        <li class="l1"><i class="ex"></i><label><input type="checkbox"><svg><use href="#rain"/></svg><span>Layer Side</span></label></li>
        <li class="l1"><i class="ex"></i><label><input type="checkbox" class="part"><svg><use href="#rain"/></svg><span>Local Deformations</span></label></li>
      </ul>
      <div class="track"><i></i></div>
      </div>
      <div class="scroller lower">
      <ul class="tree">
        <li><i class="ex open"></i><label><input type="checkbox" class="part"><svg><use href="#rbeye"/></svg><span>Support Reactions</span></label></li>
        <li class="l1"><i class="ex"></i><label><input type="checkbox" checked><svg><use href="#treeic"/></svg><span>Actual</span></label></li>
        <li class="l1"><i class="ex"></i><label><input type="checkbox"><svg><use href="#treeic"/></svg><span>Smooth Distribution</span></label></li>
        <li class="l1"><label><input type="checkbox"><svg><use href="#treeic"/></svg><span>Draw in XY-Plane</span></label></li>
        <li class="l1 sel"><i class="ex"></i><label><input type="checkbox" checked><svg><use href="#treeic"/></svg><span>Info</span></label></li>
        <li class="l1"><label><input type="checkbox"><svg><use href="#treeic"/></svg><span>With sign</span></label></li>
        <li><i class="ex"></i><label><input type="checkbox" class="part"><svg><use href="#rbeye"/></svg><span>Result Sections</span></label></li>
      </ul>
      <div class="track"><i></i></div>
      </div>
      <div class="tabs">
        <button aria-label="Data"><svg><use href="#folder"/></svg></button>
        <button aria-label="Display"><svg><use href="#bigeye"/></svg></button>
        <button aria-label="Views"><svg><use href="#cam"/></svg></button>
        <button class="cur" aria-label="Results"><svg><use href="#redblue"/></svg></button>
      </div>
    </aside>

    <main class="view">
      <svg class="plot" viewBox="262 80 497 458">
        <defs>
          <pattern id="mesh" x="271.700" y="0" width="10.070" height="10" patternUnits="userSpaceOnUse"><path d="M.5 0V10" stroke="#777" stroke-width="1"/></pattern>
          <pattern id="bars" x="474.800" y="0" width="12.650" height="10" patternUnits="userSpaceOnUse"><path d="M.5 0V10" stroke="#ff8f8f" stroke-width="1"/></pattern>
          <pattern id="bbars" x="274" y="0" width="12.550" height="10" patternUnits="userSpaceOnUse"><path d="M.5 0V10" stroke="#a9c9f2" stroke-width="1"/></pattern>
        </defs>
        <path d="M715 294H760" stroke="#eee"/>
        <path d="M262 270H450L460 294H262Z" fill="#dce6f3"/>
        <path d="M262 270H450L460 294H262Z" fill="url(#bbars)"/>
        <path d="M262 270H450L475 340" fill="none" stroke="#a9c9f2"/>
        <path d="M460 294L475 340.500H715V294Z" fill="#f3d3d4"/>
        <path d="M460 294L475 340.500H715V294Z" fill="url(#bars)"/>
        <path d="M460 294L475 340.500H715V294" fill="none" stroke="#f47f7f"/>
        <rect x="262" y="253" width="453" height="82" fill="url(#mesh)"/>
        <path d="M437.500 253V335M432.500 253V335M488.500 253V335M593.500 253V335M689.500 253V335M715 253V335" stroke="#888"/>
        <path d="M262 257.500H715M262 261.500H715M262 268.500H715M262 276.500H715M262 284.500H715M262 303.500H715M262 311.500H715M262 320.500H715M262 326.500H715M262 331.500H715" stroke="#777"/>
        <path d="M262 253H715M262 335H715" stroke="#777" stroke-width="1.500"/>
        <path d="M262 293H715" stroke="#b5b5b5" stroke-width="2" stroke-dasharray="12 5"/>
        <path d="M262 294.500H715" stroke="#6d94c6"/>
        <g stroke="#8194ab" stroke-width="2"><path d="M463 168V255M513.500 107V294"/><path d="M413 300V482" stroke="#5f7992"/></g>
        <path d="M406 224.500H519M412.500 222V249M409 228l7-7M459.500 228l7-7M510 228l7-7" stroke="#999" fill="none"/>
        <path d="M463 253l3 5 3 1v23h-12V259l3-1zM457 303h12v24l-4 5-2 4-2-4-4-5z" fill="#3f86d0"/>
        <path d="M457 274h12M457 317h12" stroke="#a9cdf2"/>
        <g stroke="#888" stroke-dasharray="7 3 1 3"><path d="M463.500 336V388M513.500 296V388"/></g>
        <path d="M409.500 387h7l-3.500 8zM460 387h7l-3.500 8zM510 387h7l-3.500 8z" fill="#999"/>
        <path d="M409.500 300h7l-3.500-7z" fill="#456b92"/>
        <path d="M715 150V240" stroke="#115d87" stroke-width="1.600"/><path d="M711.500 237h7L715 245z" fill="#115d87"/>
        <g class="halo"><rect x="390" y="284" width="43" height="8"/><rect x="441" y="284" width="43" height="8"/><rect x="491" y="284" width="44" height="8"/></g>
        <path d="M411 292h4v4h-4zM511.500 292h4v4h-4z" fill="#2456c6"/><path d="M461 292h4v4h-4z" fill="#1d5f68"/><path d="M713 292h4v4h-4z" fill="#115d87"/>
        <path d="M448.500 268.500h4v4h-4z" fill="#56779c"/><path d="M473.500 339h4v4h-4zM713 339h4v4h-4z" fill="#b14950"/>
        <g class="num">
          <text x="515" y="108">10.00</text><text x="464" y="170">2.50</text>
          <text x="414" y="499">5.00</text><text x="443" y="268">-5.01</text>
          <g fill="#777"><text x="429" y="220">0.10</text><text x="480" y="220">0.10</text></g>
          <g fill="#a8484e"><text x="468" y="351">10.01</text><text x="710" y="351">9.98</text></g>
          <text x="715" y="145" fill="#115d87">10.0</text>
        </g>
        <g class="sec"><text x="390" y="290">Section 101</text><text x="441" y="290">Section 102</text><text x="491" y="290">Section 103</text></g>
        <path d="M306 482H330" stroke="#e11" stroke-width="2"/><path d="M328 479l8 3-8 3z" fill="#e11"/>
        <path d="M306 482V505" stroke="#1a1ab0" stroke-width="2"/><path d="M303 504h6l-3 8z" fill="#11116a"/>
        <circle cx="306" cy="482" r="2.800" fill="#2fbf2f"/>
        <text class="ax" x="340" y="485" fill="#e33">X</text><text class="ax" x="303" y="522" fill="#22a">Z</text>
      </svg>
      <div class="info">Visibility mode<br>LC1 - Vertikallast / Vertical Load<br>Loads [kN]<br>Static Analysis<br>Forces V<sub>z</sub> [kN]</div>
      <div class="foot"><span>max V<sub>z</sub> : 10.01 | min V<sub>z</sub> : -5.01 kN</span><span>Dimensions [m]</span></div>
    </main>
  </div>

  <div class="toolbar bottom">
    <div class="group">
      <button class="tb" aria-label="Coordinate systems"><svg><use href="#cs"/></svg></button>
      <div class="cscombo"><i class="sw c2"></i><select aria-label="Coordinate system"><option>1 - Global XYZ</option></select></div>
      <i class="sep"></i>
      <button class="tb" aria-label="Isometric view"><svg><use href="#vcube"/></svg></button>
      <button class="tb" aria-label="View in X"><svg><use href="#vx"/></svg></button>
      <button class="tb" aria-label="View in Y"><svg><use href="#vy"/></svg></button>
      <button class="tb" aria-label="View in Z"><svg><use href="#vz"/></svg></button>
      <button class="tb" aria-label="Rotate view"><svg><use href="#vr"/></svg></button>
      <i class="sep"></i>
      <button class="tb" aria-label="New section"><svg><use href="#vbuild"/></svg></button>
      <button class="tb" aria-label="Sections"><svg><use href="#vbuild"/></svg></button>
      <span class="more">»</span>
    </div>
    <div class="group">
      <button class="tb on" aria-label="Show grid"><svg><use href="#grideye"/></svg></button>
      <i class="gap"></i>
      <button class="tb" aria-label="New line grid"><svg><use href="#tilenew"/></svg></button>
      <button class="tb on" aria-label="Show line grid"><svg><use href="#tileeye"/></svg></button>
      <i class="gap"></i>
      <button class="tb" aria-label="New guideline"><svg><use href="#marknew"/></svg></button>
      <button class="tb on" aria-label="Show guidelines"><svg><use href="#markeye"/></svg></button>
      <i class="gap wide"></i>
      <button class="tb" aria-label="Ortho"><svg><use href="#ell"/></svg></button>
      <i class="gap"></i>
      <button class="tb on" aria-label="Grid snap"><svg><use href="#gmag"/></svg></button>
      <button class="tb on" aria-label="Object snap"><svg><use href="#mag"/></svg></button>
      <button class="tb on" aria-label="Snap node"><svg><use href="#sq"/></svg></button>
      <button class="tb on" aria-label="Snap centre"><svg><use href="#sqo"/></svg></button>
      <button class="tb" aria-label="Snap intersection"><svg><use href="#sqx"/></svg></button>
      <button class="tb on" aria-label="Snap perpendicular"><svg><use href="#perp"/></svg></button>
      <button class="tb" aria-label="Snap midpoint"><svg><use href="#sl"/></svg></button>
      <button class="tb" aria-label="Snap parallel"><svg><use href="#par"/></svg></button>
      <button class="tb" aria-label="Snap tangent"><svg><use href="#tan"/></svg></button>
      <button class="tb" aria-label="Snap circle"><svg><use href="#circ"/></svg></button>
      <button class="tb" aria-label="Snap division"><svg><use href="#cr"/></svg></button>
      <button class="tb" aria-label="Snap distance"><svg><use href="#cr"/></svg></button>
      <button class="tb" aria-label="Snap edge"><svg><use href="#cr"/></svg></button>
      <button class="tb" aria-label="Snap points"><svg><use href="#dots"/></svg></button>
      <button class="tb on" aria-label="Snap grid lines"><svg><use href="#gridl"/></svg></button>
      <button class="tb on" aria-label="Snap guidelines"><svg><use href="#mark"/></svg></button>
      <button class="tb on" aria-label="Snap background"><svg><use href="#layers"/></svg></button>
      <button class="tb on" aria-label="Snap clipping"><svg><use href="#clip"/></svg></button>
      <button class="tb on" aria-label="Snap support"><svg><use href="#pin"/></svg></button>
    </div>
  </div>
  <footer class="status"><span>Visibility mode</span><span>CS: Global XYZ</span><span>Plane: XY</span><span></span><span></span><span></span></footer>

  <svg class="notes" viewBox="0 0 760 570">
    <defs>
      <marker id="head" markerUnits="userSpaceOnUse" markerWidth="12" markerHeight="10" refX="8" refY="4" orient="auto"><path d="M0 0L10 4L0 8Z" fill="#f54343"/></marker>
    </defs>
    <g class="arrows">
      <rect x="47" y="288.500" width="46.500" height="23.500"/>
      <path d="M99 299.500L269 286" marker-end="url(#head)"/>
      <path d="M605 234L591.500 291" marker-end="url(#head)"/>
      <path d="M399 365.500L446 302" marker-end="url(#head)"/>
      <path d="M548.500 366.500L479 330" marker-end="url(#head)"/>
    </g>
    <g class="call">
      <text x="605" y="227">Result Beam</text>
      <text x="352.500" y="366">zero crossing next</text><text x="352.500" y="378">to the support line</text>
      <text x="577.500" y="377">no jump but</text><text x="577.500" y="389">linear function</text>
    </g>
  </svg>
</div>
</body>
</html>
```

FILE: styles.css
```css
* { box-sizing: border-box; }
body {
  margin: 0;
  background: #8f99ad;
  font-family: Roboto, "Noto Sans", sans-serif;
  font-size: 9px;
  line-height: 12px;
  color: #222;
}
button { border: 0; padding: 0; background: none; font: inherit; color: inherit; }
select, input { font: inherit; color: inherit; }
ul { list-style: none; margin: 0; padding: 0; }
h1, h2 { margin: 0; font: inherit; }
.sprite { position: absolute; width: 0; height: 0; }

.app {
  position: relative;
  display: flex;
  flex-direction: column;
  height: 100vh;
  border: 1px solid #c3c7cf;
  border-bottom: 2px solid #a9aeb9;
  border-radius: 6px 6px 4px 4px;
  overflow: hidden;
  background: #f5f5f5;
}

.titlebar { display: flex; align-items: center; flex: 0 0 22px; padding: 0 10px 0 5px; background: #f3f3f3; }
.titlebar h1 { flex: 1; }
.logo { width: 13px; height: 13px; margin-right: 3px; }
.winbtns { display: flex; gap: 25px; }
.winbtns button { width: 10px; height: 10px; }
.winbtns svg { display: block; width: 9px; height: 9px; }

.menubar { display: flex; align-items: center; flex: 0 0 15px; color: #111; white-space: nowrap; }
.flag { width: 12px; height: 9px; margin-right: 6px; }
.menubar nav { display: flex; gap: 12px; }
.menubar a { color: inherit; text-decoration: none; }
.more { font-size: 11px; color: #444; }
.menubar > .more { margin-left: auto; }
.play { margin: 0 4px 0 5px; border: 3px solid transparent; border-left: 4px solid #777; border-right: 0; }
.search { width: 169px; height: 12px; padding: 0 2px; border: 0; background: #e6e6f1; }
.search::placeholder { color: #777; opacity: 1; }
.find { width: 12px; height: 10px; margin: 0 8px 0 4px; }
.docbtns { display: flex; gap: 6px; margin: 0 2px 0 9px; }
.docbtns button { width: 8px; height: 8px; }
.docbtns svg { display: block; width: 8px; height: 8px; }

.toolbar { display: grid; flex: 0 0 21px; background: #f5f5f5; border-top: 1px solid #eaeaea; }
.toolbar.main { grid-template-columns: 395fr 55fr 275fr 35fr; }
.toolbar.edit { grid-template-columns: 487fr 238fr 35fr; }
.group { display: flex; align-items: center; justify-content: space-between; min-width: 0; padding: 0 2px; }
.grip { width: 2px; height: 14px; border-left: 1px dotted #999; }
.sep { width: 1px; height: 13px; background: #bbb; }
.tb { display: grid; place-items: center; width: 18px; height: 18px; border-radius: 2px; }
.tb svg { width: 14px; height: 14px; }
.tb.on { background: #cce6fb; box-shadow: inset 0 0 0 1px #b3d9f7; }
.caret { display: grid; place-items: center; width: 9px; height: 12px; }
.caret::after { content: ""; width: 0; border: 2px solid transparent; border-top: 3px solid #222; border-bottom: 0; }
.caret.dim::after { border-top-color: #888; }
.lc { display: flex; align-items: center; gap: 2px; height: 16px; padding-left: 2px; background: #e8e8f2; }
.sw { width: 8px; height: 8px; background: #ccfbfb; }
.sw.c3 { width: 22px; height: 10px; background: #c2c2c2; }
.lc span { width: 22px; padding-left: 2px; }
select {
  appearance: none; border: 0; border-radius: 0; padding: 0; background: transparent; opacity: 1;
  background-image: linear-gradient(45deg, transparent 50%, #888 50%, #888 64%, transparent 64%), linear-gradient(-45deg, transparent 50%, #888 50%, #888 64%, transparent 64%);
  background-size: 4px 4px; background-repeat: no-repeat;
  background-position: right 7px center, right 4px center;
}
.lc select { width: 34px; padding-left: 2px; }
.pair { display: flex; gap: 1px; }
.pair button { display: grid; place-items: center; width: 11px; height: 16px; background: #d4d4d6; }
.tri { border: 3px solid transparent; border-left: 3px solid #444; border-right: 0; }
.tri.l { border-left: 0; border-right: 3px solid #444; }
.push { margin-left: 16px; }

.body { display: grid; grid-template-columns: 261px 1fr; flex: 1; min-height: 0; }
.nav { display: flex; flex-direction: column; min-height: 0; padding: 0 3px 0 2px; border-right: 2px solid #d8d8e0; background: #f7f7f7; }
.navhead { display: flex; align-items: center; gap: 8px; flex: 0 0 16px; margin: 0 -3px 0 -2px; padding: 0 5px; background: #d7e5f3; }
.navhead h2 { flex: 1; font-weight: 600; }
.navhead button, .navhead svg { display: block; width: 7px; height: 7px; }
.navcombo { display: flex; flex: 0 0 18px; margin: 1px 0 7px; padding: 1px 0; color: #888; }
.navcombo .box { display: flex; align-items: center; flex: 1; padding-left: 5px; background: #e4e4e6; }
.navcombo .ic { width: 11px; height: 11px; margin-right: 3px; }
.navcombo select { flex: 1; color: #888; }
.scroller { display: grid; grid-template-columns: 1fr 13px; min-height: 0; background: #fff; }
.upper { flex: 294; margin-bottom: 4px; }
.lower { flex: 97; }
.lower .tree { padding: 0 0 3px; }
.tree { display: grid; grid-auto-rows: minmax(0, 1fr); min-height: 0; overflow: hidden; }
.track { display: grid; grid-template-rows: 4% 32% 1fr; justify-items: center; background: #f0f0f0; }
.track i { grid-row: 2; width: 1px; background: #888; }
.lower .track { grid-template-rows: 58% 26% 1fr; }
.tree li { display: flex; align-items: center; min-height: 0; padding-left: 3px; }
.tree .l1 { padding-left: 18px; }
.tree .l2 { padding-left: 33px; }
.tree label { display: flex; align-items: center; flex: 1; height: 100%; margin-left: 12px; }
.ex + label { margin-left: 3px; }
.tree svg { flex: none; width: 12px; height: 12px; margin-right: 3px; }
.tree sub, .info sub, .foot sub { font-size: 8px; line-height: 0; vertical-align: -2px; }
.tree input { flex: none; appearance: none; width: 10px; height: 10px; margin: 0 4px 0 0; border: 1px solid #444; background: #fff; }
.tree input[type=radio] { border-radius: 50%; }
.tree input[type=radio]:checked { background: radial-gradient(circle, #333 0 2px, #fff 3px); }
.tree input.part { background: #cde5f8; border-color: #3d7db5; }
.tree input[type=checkbox]:checked::after { content: ""; display: block; width: 3px; height: 6px; margin-left: 3px; border: solid #444; border-width: 0 1px 1px 0; rotate: 40deg; }
.sel label {
  background:
    linear-gradient(90deg, transparent 12px, #8ac4f0 12px) 0 0 / 100% 1px no-repeat,
    linear-gradient(90deg, transparent 12px, #8ac4f0 12px) 0 100% / 100% 1px no-repeat,
    linear-gradient(90deg, transparent 12px, #cce6fd 12px);
}
.ex { width: 9px; height: 9px; display: grid; place-items: center; }
.ex::after { content: ""; width: 4px; height: 4px; border: solid #777; border-width: 1px 1px 0 0; rotate: 45deg; }
.ex.open::after { border-color: #333; rotate: 135deg; margin-top: -3px; }
.tabs { display: flex; flex: 0 0 19px; margin: 0 -3px 1px -2px; border-top: 1px solid #d8d8d8; }
.tabs button { display: grid; place-items: center; width: 28px; border-right: 1px solid #d0d0d0; }
.tabs svg { width: 12px; height: 12px; }
.tabs .cur { background: #fff; }

.view { position: relative; background: #fff; min-width: 0; overflow: hidden; }
.plot { display: block; width: 100%; height: 100%; }
.info { position: absolute; top: 3px; left: 4px; line-height: 13px; }
.foot { position: absolute; bottom: 3px; left: 4px; right: 3px; display: flex; justify-content: space-between; }
.num { font: 8px "Noto Sans", sans-serif; fill: #5f7590; }
.sec { font: 8px "Liberation Sans", sans-serif; fill: #555; }
.halo { fill: #fff; opacity: .7; }
.ax { font: 9px "Liberation Sans", sans-serif; }

.toolbar.bottom { grid-template-columns: 275fr 485fr; flex-basis: 18px; }
.bottom .group { padding: 0 1px; }
.bottom .group + .group { padding-left: 13px; }
.bottom .tb { width: 17px; height: 16px; }
.bottom .tb svg { width: 13px; height: 13px; }
.bottom .gap { width: 4px; }
.bottom .gap.wide { width: 9px; }
.cscombo { display: flex; align-items: center; width: 107px; height: 16px; padding-left: 3px; background: #e8e8f2; }
.cscombo select { flex: 1; margin-left: 4px; }
.status { display: grid; grid-template-columns: 373fr 154fr 49fr 56fr 57fr 70fr; flex: 0 0 12px; background: #e8e8f2; color: #333; font-weight: 500; }
.status span { padding-left: 3px; border-left: 1px solid #dadae4; }
.status span:first-child { padding-left: 238px; border: 0; }

.notes { position: absolute; inset: -1px; width: calc(100% + 2px); height: calc(100% + 3px); pointer-events: none; }
.arrows { fill: none; stroke: #f54343; stroke-width: 2; filter: drop-shadow(1px 2px 1px #0006); }
.call { font: 11px "Liberation Sans", sans-serif; text-anchor: middle; fill: #f54343; stroke: #fff; stroke-width: 4; stroke-linejoin: round; paint-order: stroke; filter: drop-shadow(1px 2px 1px #0007); }
```
